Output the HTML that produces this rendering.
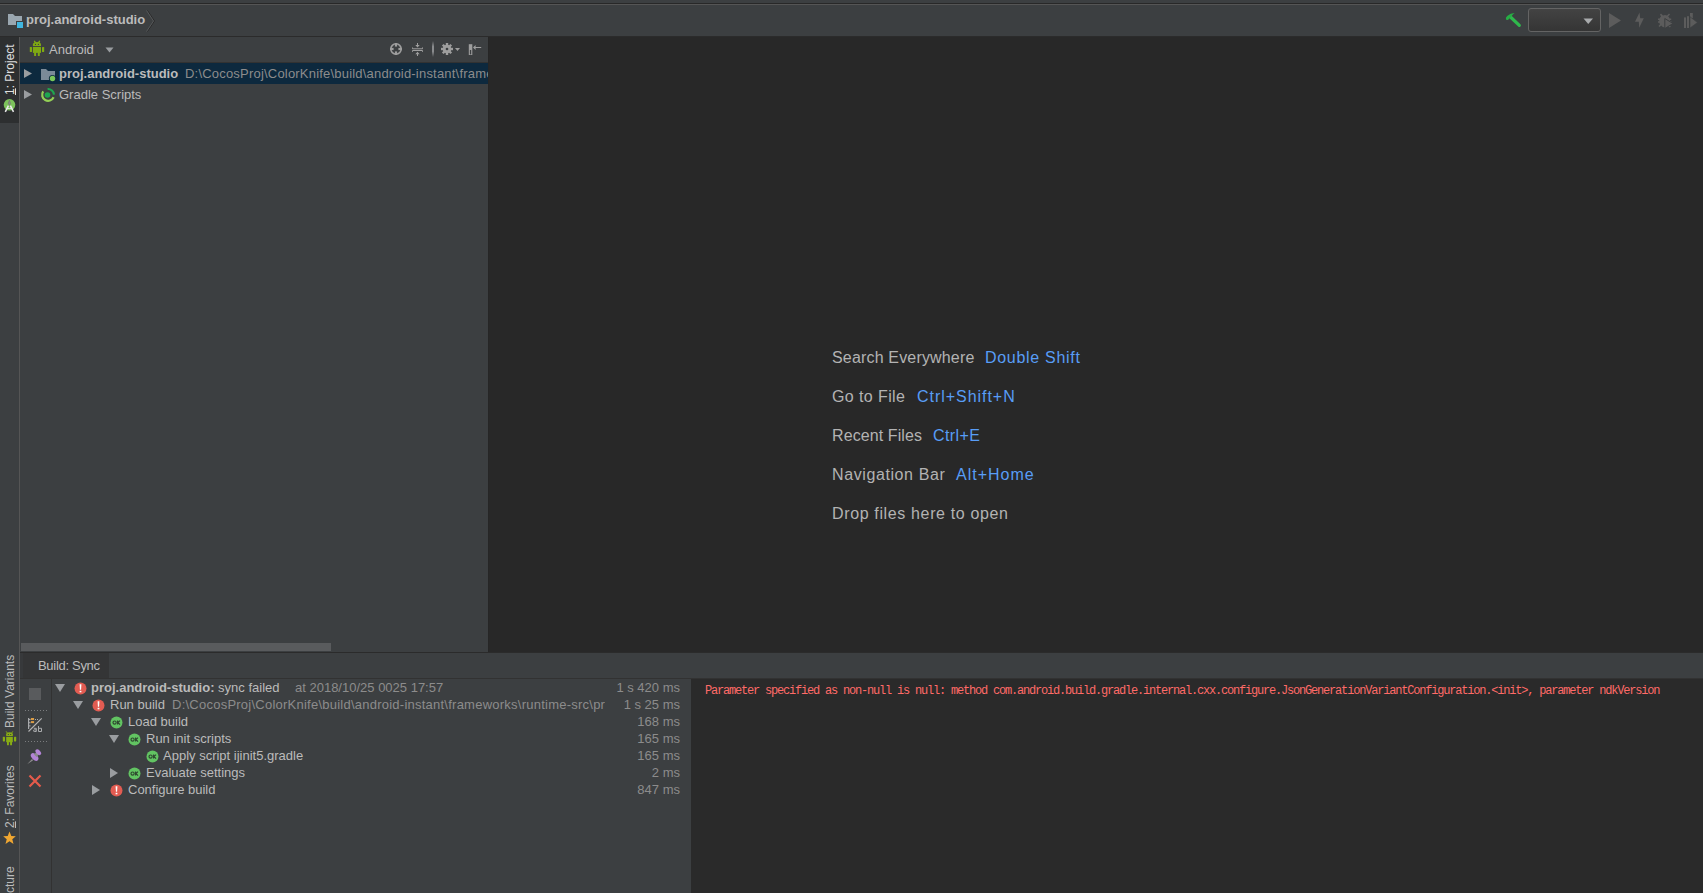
<!DOCTYPE html>
<html><head><meta charset="utf-8">
<style>
*{margin:0;padding:0;box-sizing:border-box}
html,body{width:1703px;height:893px;overflow:hidden;background:#3c3f41;font-family:"Liberation Sans",sans-serif;color:#bbbbbb}
.a{position:absolute}
.t{position:absolute;white-space:nowrap;font-size:13px;line-height:16px}
.b{font-weight:bold}
.dim{color:#8c8c8c}
</style></head><body>
<!-- top lines -->
<div class="a" style="left:0;top:0;width:1703px;height:3px;background:#3c3f41"></div>
<div class="a" style="left:0;top:3px;width:1703px;height:1px;background:#282828"></div>
<div class="a" style="left:0;top:4px;width:1703px;height:1px;background:#555555"></div>
<!-- nav bar -->
<div class="a" style="left:0;top:5px;width:1703px;height:31px;background:#3c3f41"></div>
<div class="a" style="left:0;top:36px;width:1703px;height:1px;background:#2b2b2b"></div>

<!-- left tool strip -->
<div class="a" style="left:0;top:37px;width:19px;height:856px;background:#3c3f41"></div>
<div class="a" style="left:0;top:37px;width:19px;height:86px;background:#2d2f30"></div>
<div class="a" style="left:19px;top:37px;width:1px;height:856px;background:#555555"></div>


<!-- project panel -->
<div class="a" style="left:20px;top:37px;width:468px;height:615px;background:#3c3f41"></div>
<div class="a" style="left:20px;top:62px;width:468px;height:1px;background:#323232"></div>
<div class="a" style="left:20px;top:63px;width:468px;height:21px;background:#0d293e"></div>
<div class="a" style="left:21px;top:643px;width:310px;height:8px;background:#595b5d"></div>
<div class="a" style="left:488px;top:37px;width:1px;height:615px;background:#262626"></div>

<!-- editor -->
<div class="a" style="left:489px;top:37px;width:1214px;height:615px;background:#282828"></div>

<!-- bottom panel -->
<div class="a" style="left:20px;top:652px;width:1683px;height:1px;background:#2b2b2b"></div>
<div class="a" style="left:20px;top:653px;width:1683px;height:25px;background:#3c3f41"></div>
<div class="a" style="left:20px;top:653px;width:3px;height:25px;background:#37393b"></div><div class="a" style="left:23px;top:653px;width:86px;height:25px;background:#343536"></div>
<div class="a" style="left:20px;top:678px;width:1683px;height:1px;background:#323232"></div>
<div class="a" style="left:20px;top:679px;width:671px;height:214px;background:#3c3f41"></div>
<div class="a" style="left:51px;top:679px;width:1px;height:214px;background:#323232"></div>
<div class="a" style="left:691px;top:679px;width:1012px;height:214px;background:#2a2a2a"></div>


<!-- NAV CONTENT -->
<svg class="a" style="left:7px;top:13px" width="18" height="16" viewBox="0 0 18 16">
  <path d="M1 1 H6 L8 3 H15 V12 H1 Z" fill="#9aa7b0"/>
  <rect x="9" y="8" width="8" height="8" fill="#3c3f41"/>
  <rect x="10" y="9" width="6" height="6" fill="#40b6e0"/>
</svg>
<div class="t b" style="left:26px;top:12px;color:#bbbbbb">proj.android-studio</div>
<svg class="a" style="left:146px;top:10px" width="10" height="22" viewBox="0 0 10 22">
  <path d="M1.5 0.5 L8.5 11 L1.5 21.5" fill="none" stroke="#2b2b2b" stroke-width="1"/>
  <path d="M0.5 0.5 L7.5 11 L0.5 21.5" fill="none" stroke="#555759" stroke-width="1"/>
</svg>
<!-- right toolbar -->
<svg class="a" style="left:1500px;top:5px" width="24" height="24" viewBox="0 0 24 24">
  <path d="M10.5 12 L19.3 20.3" stroke="#2fb84c" stroke-width="3.2" stroke-linecap="round"/>
  <path d="M6 14.2 Q5.2 12.8 7.2 11 Q10.5 8 14.6 8 Q12.6 9.6 11.8 11 L8.2 14.8 Q7 15.6 6 14.2 Z" fill="#26ad44"/>
</svg>
<div class="a" style="left:1528px;top:8px;width:73px;height:24px;border:1px solid #646464;border-radius:3px;background:linear-gradient(#434343,#353535)"></div>
<svg class="a" style="left:1583px;top:18px" width="11" height="7" viewBox="0 0 11 7"><path d="M0.5 0.5 H10 L5.25 6 Z" fill="#a9abad"/></svg>
<svg class="a" style="left:1600px;top:5px" width="103" height="30" viewBox="0 0 103 30">
  <g fill="#5c5c5c">
  <path d="M9 8 L21 15.5 L9 23 Z"/>
  <path d="M39.5 7.5 L35 16.8 L38.8 16.8 L39.2 22.8 L43.8 13.2 L40.2 13.2 Z"/>
  <path d="M61 8.5 L63 10.5 Q65 9.5 67 10.5 L69 8.5 L70 9.5 L68.2 11.5 Q69.3 12.5 69.6 13.5 L71.2 13.5 V15 L69.8 15 L70 16 L71.5 16.5 V18 L70 18 Q69.8 19 69.2 19.8 L70.8 21.5 L69.8 22.5 L68 21 Q66.5 22.5 65 22.5 Q62.5 22.5 61.2 20.5 L59.5 22 L58.5 21 L60 19.2 Q59.5 18.5 59.3 17.8 L58 17.8 V16.3 L59.2 16.3 V15 L58 15 V13.5 L59.6 13.5 Q60 12.4 61 11.5 L60 9.5 Z"/>
  <rect x="84" y="12.4" width="2" height="10.6"/>
  <rect x="87" y="11.2" width="2" height="11.8"/>
  <rect x="90" y="8" width="2.8" height="5"/>
  </g>
  <path d="M64.8 13.5 L73 18.5 L64.8 23.5 Z" fill="#5c5c5c" stroke="#3c3f41" stroke-width="1"/>
  <path d="M90 11.8 L97.5 17.5 L90 23 Z" fill="#5c5c5c" stroke="#3c3f41" stroke-width="0.6"/>
</svg>
<!-- PROJECT PANEL CONTENT -->
<svg class="a" style="left:29px;top:40px" width="16" height="17" viewBox="0 0 16 17">
  <g fill="#7fa912">
  <path d="M3.9 5.9 V4.6 Q3.9 1.9 8 1.9 Q12 1.9 12 4.6 V5.9 Z"/>
  <path d="M5.5 1.3 L6.3 2.5 M10.5 1.3 L9.7 2.5" stroke="#7fa912" stroke-width="1.4" stroke-linecap="round"/>
  <rect x="3.9" y="6.9" width="8.1" height="6"/>
  <rect x="0.8" y="6.9" width="2.2" height="5.1" rx="0.5"/>
  <rect x="13" y="6.9" width="2.2" height="5.1" rx="0.5"/>
  <rect x="5.1" y="12.3" width="2" height="3.7" rx="0.5"/>
  <rect x="8.8" y="12.3" width="2" height="3.7" rx="0.5"/>
  </g>
  <circle cx="6.5" cy="4.4" r="0.6" fill="#3c3f41"/><circle cx="9.4" cy="4.4" r="0.6" fill="#3c3f41"/>
</svg>
<div class="t" style="left:49px;top:42px">Android</div>
<svg class="a" style="left:105px;top:47px" width="9" height="6" viewBox="0 0 9 6"><path d="M0.5 0.5 H8.5 L4.5 5.5 Z" fill="#9a9da0"/></svg>

<!-- header icons -->
<svg class="a" style="left:389px;top:42px" width="14" height="14" viewBox="0 0 14 14">
  <circle cx="7" cy="7" r="5.2" fill="none" stroke="#9e9e9e" stroke-width="1.6"/>
  <rect x="5.9" y="1" width="2.2" height="3.6" fill="#9e9e9e"/>
  <rect x="5.9" y="9.4" width="2.2" height="3.6" fill="#9e9e9e"/>
  <rect x="1" y="5.9" width="3.6" height="2.2" fill="#9e9e9e"/>
  <rect x="9.4" y="5.9" width="3.6" height="2.2" fill="#9e9e9e"/>
</svg>
<svg class="a" style="left:411px;top:42px" width="13" height="15" viewBox="0 0 13 15">
  <g fill="none" stroke="#9e9e9e" stroke-width="1">
    <path d="M1.5 5.5 V6.8 H11.5 V5.5"/>
    <path d="M1.5 9.8 V8.5 H11.5 V9.8"/>
    <path d="M6.5 1 V4.5 M6.5 10.8 V14"/>
  </g>
  <path d="M4.3 3 L6.5 5.5 L8.7 3 Z M4.3 12.3 L6.5 9.8 L8.7 12.3 Z" fill="#9e9e9e"/>
</svg>
<div class="a" style="left:432px;top:41px;width:2px;height:16px;background:linear-gradient(#3c3f41,#8a8c8e 35%,#8a8c8e 65%,#3c3f41)"></div>
<svg class="a" style="left:440px;top:42px" width="22" height="14" viewBox="0 0 22 14">
  <g fill="#9e9e9e">
   <circle cx="7" cy="7" r="4.3"/>
   <rect x="5.8" y="1" width="2.4" height="12"/>
   <rect x="1" y="5.8" width="12" height="2.4"/>
   <rect x="5.8" y="1" width="2.4" height="12" transform="rotate(45 7 7)"/>
   <rect x="5.8" y="1" width="2.4" height="12" transform="rotate(-45 7 7)"/>
   <path d="M15 6 H20 L17.5 9 Z"/>
  </g>
  <circle cx="7" cy="7" r="1.3" fill="#3c3f41"/>
</svg>
<svg class="a" style="left:468px;top:43px" width="14" height="13" viewBox="0 0 14 13">
  <rect x="0.8" y="1.2" width="3.5" height="10.8" fill="#9e9e9e"/>
  <rect x="1.9" y="7" width="1.3" height="4.4" fill="#3c3f41"/>
  <path d="M5 4.5 L7.6 1.9 V3.9 H13.2 V5.1 H7.6 V7.1 Z" fill="#9e9e9e"/>
</svg>
<!-- tree rows -->
<svg class="a" style="left:24px;top:69px" width="8" height="9" viewBox="0 0 8 9"><path d="M0 0 L8 4.5 L0 9 Z" fill="#9a9da0"/></svg>
<svg class="a" style="left:40px;top:68px" width="16" height="14" viewBox="0 0 16 14">
  <path d="M1 1 H6 L8 3 H15 V12 H1 Z" fill="#7b8a98"/>
  <circle cx="12.5" cy="10.5" r="3.6" fill="#0d293e"/>
  <circle cx="12.5" cy="10.5" r="2.7" fill="#7ac85a"/>
</svg>
<div class="t b" style="left:59px;top:66px">proj.android-studio</div>
<div class="t dim" style="left:185px;top:66px;width:303px;overflow:hidden;letter-spacing:0.2px">D:\CocosProj\ColorKnife\build\android-instant\frameworks</div>

<svg class="a" style="left:24px;top:90px" width="8" height="9" viewBox="0 0 8 9"><path d="M0 0 L8 4.5 L0 9 Z" fill="#9a9da0"/></svg>
<svg class="a" style="left:40px;top:87px" width="16" height="16" viewBox="0 0 16 16">
  <path d="M13.6 10.3 A6 6 0 1 1 3.2 4.4" fill="none" stroke="#94d056" stroke-width="2.2"/>
  <path d="M7.6 2 A6 6 0 0 1 14 7.6" fill="none" stroke="#1ea750" stroke-width="2.2"/>
  <circle cx="7.5" cy="8" r="2.8" fill="#1ea750"/>
</svg>
<div class="t" style="left:59px;top:87px">Gradle Scripts</div>

<!-- BOTTOM PANEL -->
<div class="t" style="left:38px;top:658px;letter-spacing:-0.3px">Build: Sync</div>
<!-- left toolbar -->
<div class="a" style="left:29px;top:688px;width:12px;height:12px;background:#595b5d"></div>
<div class="a" style="left:25px;top:710px;width:23px;height:1px;background:repeating-linear-gradient(90deg,#7a7c7e 0 1px,transparent 1px 3px)"></div>
<svg class="a" style="left:24px;top:714px" width="22" height="22" viewBox="0 0 22 22">
  <g fill="#a9abad">
  <rect x="4" y="4" width="1.2" height="11"/>
  <rect x="5" y="5" width="1.5" height="1"/><rect x="5" y="8.2" width="1.5" height="1"/><rect x="5" y="11.4" width="1.5" height="1"/>
  <rect x="11" y="5" width="1" height="1"/><rect x="13" y="5" width="1" height="1"/>
  </g>
  <rect x="6.9" y="4" width="3.2" height="2" fill="#d99b45"/>
  <rect x="6.9" y="7.1" width="3.2" height="2" fill="#d99b45"/>
  <path d="M4.5 17.5 L17.7 4.3" stroke="#b4b4b4" stroke-width="1.1"/>
  <path d="M9.8 14.3 H12.3 V17.5 H10.2 Q9.5 17.5 9.5 16.7 Q9.5 15.9 10.2 15.9 H12.3" stroke="#a9abad" stroke-width="1" fill="none"/>
  <path d="M14.5 12 V17.5 H17.5 V14.3 H14.5" stroke="#a9abad" stroke-width="1" fill="none"/>
</svg>
<div class="a" style="left:25px;top:741px;width:23px;height:1px;background:repeating-linear-gradient(90deg,#7a7c7e 0 1px,transparent 1px 3px)"></div>
<svg class="a" style="left:26px;top:748px" width="17" height="17" viewBox="0 0 17 17">
  <path d="M1.2 16.2 L6 11 L7.2 12.2 Z" fill="#8c8c8c"/>
  <ellipse cx="8.6" cy="9" rx="4.6" ry="2.7" transform="rotate(45 8.6 9)" fill="#b384d6"/>
  <path d="M8 6.5 L10.5 4 L13 6.5 L10.5 9 Z" fill="#8a8a8a"/>
  <ellipse cx="12.3" cy="4.2" rx="3.4" ry="2.1" transform="rotate(45 12.3 4.2)" fill="#b384d6"/>
</svg>
<svg class="a" style="left:28px;top:774px" width="14" height="14" viewBox="0 0 14 14">
  <path d="M1.5 1.5 L12.5 12.5 M12.5 1.5 L1.5 12.5" stroke="#e55b4b" stroke-width="2.2"/>
</svg>
<svg class="a" style="left:55px;top:684px" width="10" height="8" viewBox="0 0 10 8"><path d="M0 0 H10 L5 8 Z" fill="#9a9da0"/></svg><svg class="a" style="left:74px;top:682px" width="13" height="13" viewBox="0 0 13 13"><circle cx="6.5" cy="6.5" r="6" fill="#e25c52"/><path d="M5.6 2.2 H7.4 L7.1 7.8 H5.9 Z" fill="#fff"/><rect x="5.6" y="8.8" width="1.8" height="1.5" fill="#fff"/></svg><div class="t b" style="left:91px;top:680px">proj.android-studio: <span style="font-weight:normal">sync failed</span></div><div class="t dim" style="left:295px;top:680px">at 2018/10/25 0025 17:57</div><div class="t dim" style="left:560px;top:680px;width:120px;text-align:right">1 s 420 ms</div><svg class="a" style="left:73px;top:701px" width="10" height="8" viewBox="0 0 10 8"><path d="M0 0 H10 L5 8 Z" fill="#9a9da0"/></svg><svg class="a" style="left:92px;top:699px" width="13" height="13" viewBox="0 0 13 13"><circle cx="6.5" cy="6.5" r="6" fill="#e25c52"/><path d="M5.6 2.2 H7.4 L7.1 7.8 H5.9 Z" fill="#fff"/><rect x="5.6" y="8.8" width="1.8" height="1.5" fill="#fff"/></svg><div class="t" style="left:110px;top:697px">Run build</div><div class="t dim" style="left:172px;top:697px;width:433px;overflow:hidden;letter-spacing:0.24px">D:\CocosProj\ColorKnife\build\android-instant\frameworks\runtime-src\proj.android-studio</div><div class="t dim" style="left:560px;top:697px;width:120px;text-align:right">1 s 25 ms</div><svg class="a" style="left:91px;top:718px" width="10" height="8" viewBox="0 0 10 8"><path d="M0 0 H10 L5 8 Z" fill="#9a9da0"/></svg><svg class="a" style="left:110px;top:716px" width="13" height="13" viewBox="0 0 13 13"><defs></defs><circle cx="6.5" cy="6.5" r="6" fill="#62c462"/><circle cx="4.6" cy="6.6" r="1.6" fill="none" stroke="#2f4a30" stroke-width="1.2"/><path d="M7.6 4.6 V8.6 M7.9 6.6 L10 4.6 M7.9 6.4 L10 8.6" stroke="#2f4a30" stroke-width="1.2" fill="none"/></svg><div class="t" style="left:128px;top:714px">Load build</div><div class="t dim" style="left:560px;top:714px;width:120px;text-align:right">168 ms</div><svg class="a" style="left:109px;top:735px" width="10" height="8" viewBox="0 0 10 8"><path d="M0 0 H10 L5 8 Z" fill="#9a9da0"/></svg><svg class="a" style="left:128px;top:733px" width="13" height="13" viewBox="0 0 13 13"><defs></defs><circle cx="6.5" cy="6.5" r="6" fill="#62c462"/><circle cx="4.6" cy="6.6" r="1.6" fill="none" stroke="#2f4a30" stroke-width="1.2"/><path d="M7.6 4.6 V8.6 M7.9 6.6 L10 4.6 M7.9 6.4 L10 8.6" stroke="#2f4a30" stroke-width="1.2" fill="none"/></svg><div class="t" style="left:146px;top:731px">Run init scripts</div><div class="t dim" style="left:560px;top:731px;width:120px;text-align:right">165 ms</div><svg class="a" style="left:146px;top:750px" width="13" height="13" viewBox="0 0 13 13"><defs></defs><circle cx="6.5" cy="6.5" r="6" fill="#62c462"/><circle cx="4.6" cy="6.6" r="1.6" fill="none" stroke="#2f4a30" stroke-width="1.2"/><path d="M7.6 4.6 V8.6 M7.9 6.6 L10 4.6 M7.9 6.4 L10 8.6" stroke="#2f4a30" stroke-width="1.2" fill="none"/></svg><div class="t" style="left:163px;top:748px">Apply script ijinit5.gradle</div><div class="t dim" style="left:560px;top:748px;width:120px;text-align:right">165 ms</div><svg class="a" style="left:110px;top:768px" width="8" height="10" viewBox="0 0 8 10"><path d="M0 0 L8 5 L0 10 Z" fill="#9a9da0"/></svg><svg class="a" style="left:128px;top:767px" width="13" height="13" viewBox="0 0 13 13"><defs></defs><circle cx="6.5" cy="6.5" r="6" fill="#62c462"/><circle cx="4.6" cy="6.6" r="1.6" fill="none" stroke="#2f4a30" stroke-width="1.2"/><path d="M7.6 4.6 V8.6 M7.9 6.6 L10 4.6 M7.9 6.4 L10 8.6" stroke="#2f4a30" stroke-width="1.2" fill="none"/></svg><div class="t" style="left:146px;top:765px">Evaluate settings</div><div class="t dim" style="left:560px;top:765px;width:120px;text-align:right">2 ms</div><svg class="a" style="left:92px;top:785px" width="8" height="10" viewBox="0 0 8 10"><path d="M0 0 L8 5 L0 10 Z" fill="#9a9da0"/></svg><svg class="a" style="left:110px;top:784px" width="13" height="13" viewBox="0 0 13 13"><circle cx="6.5" cy="6.5" r="6" fill="#e25c52"/><path d="M5.6 2.2 H7.4 L7.1 7.8 H5.9 Z" fill="#fff"/><rect x="5.6" y="8.8" width="1.8" height="1.5" fill="#fff"/></svg><div class="t" style="left:128px;top:782px">Configure build</div><div class="t dim" style="left:560px;top:782px;width:120px;text-align:right">847 ms</div>
<div class="a" style="left:705px;top:684px;white-space:nowrap;font-family:'Liberation Mono',monospace;font-size:12px;line-height:14px;letter-spacing:-1.2px;color:#ff6b68">Parameter specified as non-null is null: method com.android.build.gradle.internal.cxx.configure.JsonGenerationVariantConfiguration.&lt;init&gt;, parameter ndkVersion</div>

<!-- LEFT STRIP -->
<div class="a" style="left:3px;top:95px;transform:rotate(-90deg);transform-origin:0 0;white-space:nowrap;font-size:12px;line-height:14px;color:#e0e0e0"><span style="text-decoration:underline">1</span>: Project</div>
<svg class="a" style="left:3px;top:98px" width="13" height="15" viewBox="0 0 13 15">
  <circle cx="6.5" cy="6.8" r="5.8" fill="#7cc35a"/>
  <path d="M6.4 2.2 L5.3 5.2 L6.4 7.4 L7.5 5.2 Z" fill="#8a8f88" stroke="#6e736c" stroke-width="0.6"/>
  <path d="M5.4 7.6 L2.3 13.8 M7.4 7.6 L10.5 13.8" stroke="#ececec" stroke-width="1.5"/>
  <path d="M4 10 Q6.4 11.2 8.8 10" stroke="#ececec" stroke-width="1" fill="none"/>
</svg>
<div class="a" style="left:3px;top:728px;transform:rotate(-90deg);transform-origin:0 0;white-space:nowrap;font-size:12px;line-height:14px;color:#bbbbbb">Build Variants</div>
<svg class="a" style="left:2px;top:731px" width="15" height="15" viewBox="0 0 15 15">
  <g fill="#88ad14">
  <path d="M4.2 5 V3.3 Q4.2 1.2 7.5 1.2 Q10.8 1.2 10.8 3.3 V5 Z"/>
  <path d="M3.8 0.5 L5.6 1.9 M11.2 0.5 L9.4 1.9" stroke="#88ad14" stroke-width="1"/>
  <rect x="4.2" y="5.8" width="6.6" height="5.4"/>
  <rect x="0.8" y="5.8" width="2.2" height="4.6" rx="0.6"/>
  <rect x="12" y="5.8" width="2.2" height="4.6" rx="0.6"/>
  <rect x="5" y="10.5" width="1.9" height="3.8" rx="0.6"/>
  <rect x="8.1" y="10.5" width="1.9" height="3.8" rx="0.6"/>
  </g>
  <rect x="5.8" y="3" width="1" height="1" fill="#3c3f41"/><rect x="8.2" y="3" width="1" height="1" fill="#3c3f41"/>
</svg>
<div class="a" style="left:3px;top:828px;transform:rotate(-90deg);transform-origin:0 0;white-space:nowrap;font-size:12px;line-height:14px;color:#bbbbbb"><span style="text-decoration:underline">2</span>: Favorites</div>
<svg class="a" style="left:3px;top:831px" width="13" height="14" viewBox="0 0 13 14">
  <path d="M6.5 0.5 L8.3 5 L12.8 5.2 L9.3 8.2 L10.5 13 L6.5 10.3 L2.5 13 L3.7 8.2 L0.2 5.2 L4.7 5 Z" fill="#f0a732"/>
</svg>
<div class="a" style="left:3px;top:915px;transform:rotate(-90deg);transform-origin:0 0;white-space:nowrap;font-size:12px;line-height:14px;color:#bbbbbb">Structure</div>

<!-- EDITOR EMPTY TEXT -->
<div class="a" style="left:832px;top:347.5px;font-size:16px;line-height:20px;white-space:nowrap;color:#b3b3b3;letter-spacing:0.17px">Search Everywhere</div>
<div class="a" style="left:985px;top:347.5px;font-size:16px;line-height:20px;white-space:nowrap;color:#589df6;letter-spacing:0.7px">Double Shift</div>
<div class="a" style="left:832px;top:386.5px;font-size:16px;line-height:20px;white-space:nowrap;color:#b3b3b3;letter-spacing:0.4px">Go to File</div>
<div class="a" style="left:917px;top:386.5px;font-size:16px;line-height:20px;white-space:nowrap;color:#589df6;letter-spacing:0.96px">Ctrl+Shift+N</div>
<div class="a" style="left:832px;top:425.5px;font-size:16px;line-height:20px;white-space:nowrap;color:#b3b3b3;letter-spacing:0.1px">Recent Files</div>
<div class="a" style="left:933px;top:425.5px;font-size:16px;line-height:20px;white-space:nowrap;color:#589df6;letter-spacing:0.4px">Ctrl+E</div>
<div class="a" style="left:832px;top:464.5px;font-size:16px;line-height:20px;white-space:nowrap;color:#b3b3b3;letter-spacing:0.6px">Navigation Bar</div>
<div class="a" style="left:956px;top:464.5px;font-size:16px;line-height:20px;white-space:nowrap;color:#589df6;letter-spacing:1.0px">Alt+Home</div>
<div class="a" style="left:832px;top:503.5px;font-size:16px;line-height:20px;white-space:nowrap;color:#b3b3b3;letter-spacing:0.64px">Drop files here to open</div>
</body></html>
